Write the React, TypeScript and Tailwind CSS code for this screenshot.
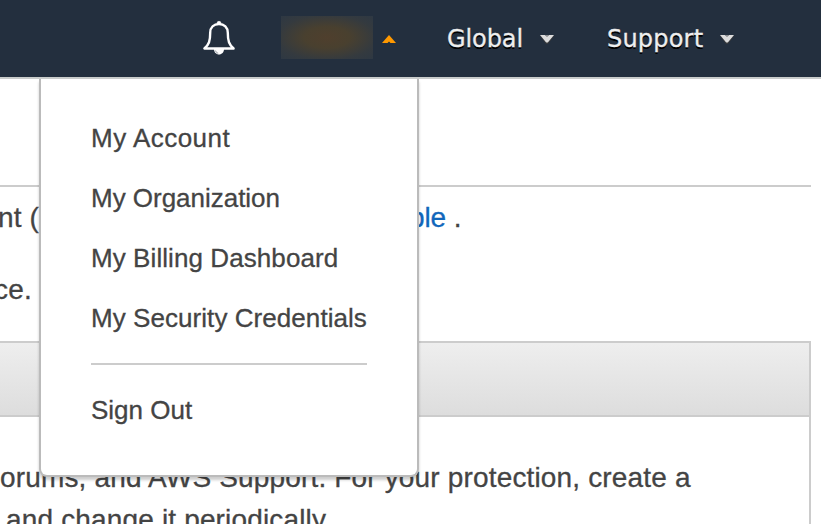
const menuItems = [
  { label: 'My Account', spacing: 'tracking-[0.48px]' },
  { label: 'My Organization', spacing: 'tracking-[-0.02px]' },
  { label: 'My Billing Dashboard', spacing: 'tracking-[0.08px]' },
  { label: 'My Security Credentials', spacing: 'tracking-[0.06px]' },
];

function Bell() {
  return (
    <svg width="34" height="38" viewBox="0 0 34 38" fill="none" aria-label="Notifications">
      <path
        d="M17 5c-5.200 0-8.800 3.400-8.800 8.800 0 8.200-1.200 11.800-5.800 15.700h29.200c-4.600-3.900-5.800-7.500-5.800-15.700C25.800 8.400 22.200 5 17 5Z"
        stroke="#fff"
        strokeWidth="2.400"
        strokeLinejoin="round"
      />
      <path d="M15 4.300a2 2 0 0 1 4 0Z" fill="#fff" stroke="#fff" strokeWidth="0.600" />
      <path d="M12 30h10c0 3.200-2.200 5.500-5 5.500s-5-2.300-5-5.500Z" fill="#fff" />
      <path d="M13.600 31.600c.3 1.400 1.200 2.300 2.600 2.600" stroke="#6b737d" strokeWidth="0.800" />
    </svg>
  );
}

function DownArrow() {
  return (
    <svg width="16" height="10" viewBox="0 0 16 10">
      <path d="M1 1h14L9 9H7Z" fill="#37393c" />
      <path d="M1 0h5l2 1.500L10 0h5L8.800 7.500H7.200Z" fill="#ddd" />
      <path d="M6 0h4L8 2Z" fill="#8a8c8f" />
    </svg>
  );
}

function Header() {
  return (
    <header className="flex h-[79px] items-start border-b-2 border-[#c9cccb] bg-[#232f3e] pl-[202px] font-['DejaVu_Sans',sans-serif] text-[24px] leading-[79px] text-[#eee]">
      <div className="mt-[19px] h-[38px] w-[34px]">
        <Bell />
      </div>
      <div className="mt-4 ml-[45px] h-[43px] w-[92px] overflow-hidden bg-[#2f3941]">
        <div className="h-full w-full bg-[radial-gradient(ellipse_at_50%_50%,#4f3f2d_0%,#49402f_35%,#343a3f_75%,#2e3843_100%)]" />
      </div>
      <svg className="mt-[35px] ml-[9px]" width="14" height="8" viewBox="0 0 14 8">
        <path d="M7 0L14 8H8.500L7 6.500L5.500 8H0Z" fill="#f90" />
      </svg>
      <span className="ml-[51px] w-[77px] whitespace-nowrap tracking-[-0.1px] [-webkit-text-stroke:0.3px_#eee] [text-shadow:0_2px_0_#000]">Global</span>
      <div className="mt-[35px] ml-[15px] h-[10px] w-4"><DownArrow /></div>
      <span className="ml-[52px] w-[98px] whitespace-nowrap tracking-[0.2px] [-webkit-text-stroke:0.3px_#eee] [text-shadow:0_2px_0_#000]">Support</span>
      <div className="mt-[35px] ml-[14px] h-[10px] w-4"><DownArrow /></div>
    </header>
  );
}

function AccountMenu() {
  return (
    <nav className="absolute top-[79px] left-[39px] h-[398px] w-[380px] rounded-b-[8px] border-x-2 border-b-2 border-[#bbb] bg-white px-[50px] pt-[29px] text-[26px] [-webkit-text-stroke:0.3px_#444] shadow-[0_3px_3px_rgba(0,0,0,0.2)]">
      {menuItems.map((item) => (
        <a key={item.label} className={`block h-[60px] whitespace-nowrap leading-[60px] ${item.spacing}`}>{item.label}</a>
      ))}
      <hr className="mt-[15px] mb-[15px] border-t-2 border-[#ccc]" />
      <a className="block h-[60px] leading-[60px]">Sign Out</a>
    </nav>
  );
}

export default function App() {
  return (
    <div className="relative h-[524px] w-[821px] overflow-hidden bg-white font-['Liberation_Sans',Arial,sans-serif] text-[#444]">
      <Header />
      <main className="whitespace-nowrap text-[28px] tracking-[0.16px] [-webkit-text-stroke:0.3px_#444]">
        <div className="mr-[10px] h-[108px] border-b-2 border-[#ccc]" />
        <p className="-ml-[2px] flex h-[62px] leading-[62px]">
          <span className="w-[411px]">nt (</span>
          <span className="tracking-[-0.1px]"><span className="text-[#1166bb] [-webkit-text-stroke:0.3px_#1166bb]">ble</span> .</span>
        </p>
        <p className="-ml-[6px] mt-[11px] h-[60px] leading-[60px]">ce.</p>
        <section className="mt-[21px] mr-[10px] h-[200px] border-t-2 border-r-2 border-[#ccc]">
          <div className="h-[74px] border-b-2 border-[#ccc] bg-linear-to-b from-[#eee] to-[#ddd]" />
          <div className="pt-10">
            <p className="h-[42px] leading-[42px]">orums, and AWS Support. For your protection, create a</p>
            <p className="h-[42px] pl-[6px] leading-[42px]">and change it periodically.</p>
          </div>
        </section>
      </main>
      <AccountMenu />
    </div>
  );
}
